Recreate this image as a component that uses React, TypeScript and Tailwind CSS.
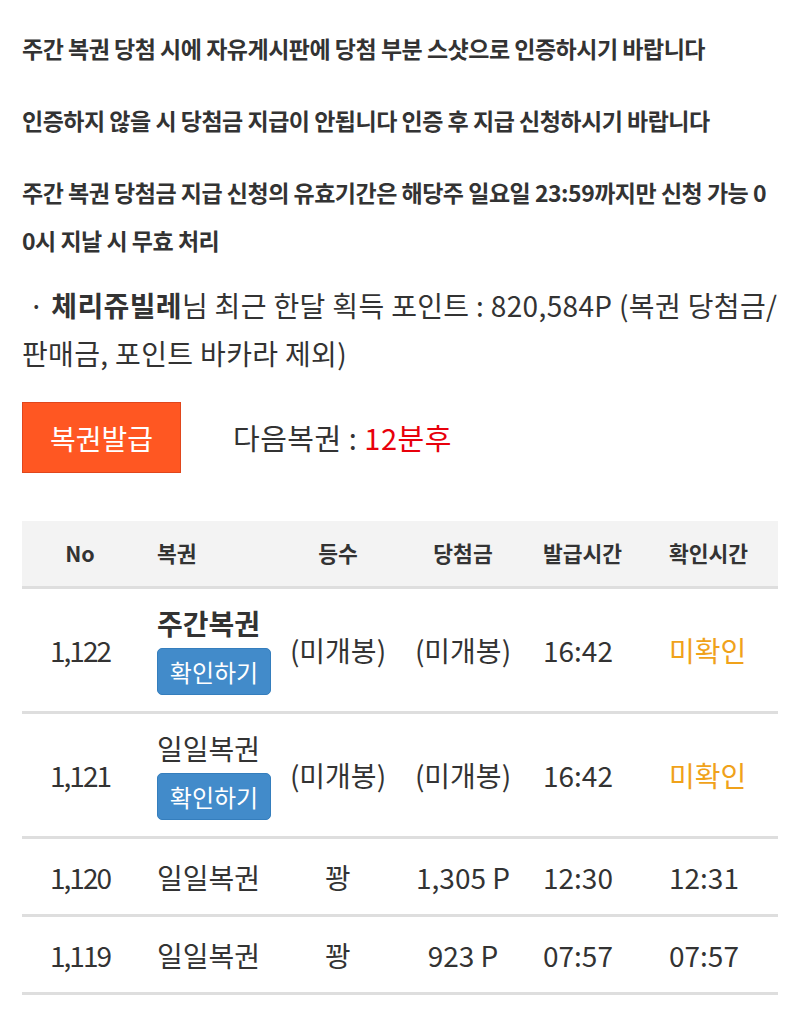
import React from "react";

type Row = {
  no: string;
  name: string;
  bold?: boolean;
  check?: boolean;
  rank: string;
  prize: string;
  issued: string;
  confirmed: string;
  pending?: boolean;
};

const rows: Row[] = [
  { no: "1,122", name: "주간복권", bold: true, check: true, rank: "(미개봉)", prize: "(미개봉)", issued: "16:42", confirmed: "미확인", pending: true },
  { no: "1,121", name: "일일복권", check: true, rank: "(미개봉)", prize: "(미개봉)", issued: "16:42", confirmed: "미확인", pending: true },
  { no: "1,120", name: "일일복권", rank: "꽝", prize: "1,305 P", issued: "12:30", confirmed: "12:31" },
  { no: "1,119", name: "일일복권", rank: "꽝", prize: "923 P", issued: "07:57", confirmed: "07:57" },
];

const cols = "grid grid-cols-[116px_144px_112px_138px_125px_121px]";

export default function App() {
  return (
    <div
      className="w-[800px] bg-white px-[22px] pt-6 pb-4 text-[#333]"
      style={{ fontFamily: '"Noto Sans CJK KR", "Noto Sans", sans-serif' }}
    >
      <p className="text-[23px] font-bold leading-[48px] tracking-[-0.5px]">
        주간 복권 당첨 시에 자유게시판에 당첨 부분 스샷으로 인증하시기 바랍니다
      </p>
      <p className="mt-6 text-[23px] font-bold leading-[48px] tracking-[-0.5px]">
        인증하지 않을 시 당첨금 지급이 안됩니다 인증 후 지급 신청하시기 바랍니다
      </p>
      <p className="mt-6 text-[23px] font-bold leading-[48px] tracking-[-0.5px]">
        주간 복권 당첨금 지급 신청의 유효기간은 해당주 일요일 23:59까지만 신청 가능 0
        <br />
        0시 지날 시 무효 처리
      </p>

      <p className="mt-[17px] text-[28px] leading-[48px] tracking-[0.35px]">
        {"\u00a0· "}
        <span className="font-bold">체리쥬빌레</span>님 최근 한달 획득 포인트 : 820,584P (복권 당첨금/
        <br />
        판매금, 포인트 바카라 제외)
      </p>

      <div className="mt-[25px] flex items-center">
        <button className="flex h-[71px] w-[159px] items-center justify-center border border-[#e0461c] bg-[#ff5722] text-[28px] text-white">
          복권발급
        </button>
        <div className="ml-[52px] text-[29px] tracking-[0.5px]">
          다음복권 : <span className="text-[#e8000b]">12분후</span>
        </div>
      </div>

      <div className="mt-12 w-[756px]">
        <div className={`${cols} h-[68px] items-center border-b-[3px] border-[#dedede] bg-[#f3f3f3] text-[21.5px] font-bold`}>
          <div className="text-center">No</div>
          <div className="pl-[19px]">복권</div>
          <div className="text-center">등수</div>
          <div className="text-center">당첨금</div>
          <div className="pl-[11px]">발급시간</div>
          <div className="pl-[12px]">확인시간</div>
        </div>
        {rows.map((r) => (
          <div
            key={r.no}
            className={`${cols} items-center border-b-[3px] border-[#dedede] text-[28px] ${r.check ? "py-4" : "h-[78px]"}`}
          >
            <div className="text-center tracking-[-2px]">{r.no}</div>
            <div className="flex flex-col items-start pl-[19px]">
              <div className={`leading-[36px] ${r.bold ? "font-bold" : ""}`}>{r.name}</div>
              {r.check && (
                <button className="mt-[7px] flex h-[47px] w-[114px] items-center justify-center rounded-[5px] border border-[#357ebd] bg-[#428bca] text-[24px] text-white">
                  확인하기
                </button>
              )}
            </div>
            <div className="text-center">{r.rank}</div>
            <div className="text-center">{r.prize}</div>
            <div className="pl-[11px]">{r.issued}</div>
            <div className={`pl-[12px] ${r.pending ? "text-[#f0a21a]" : ""}`}>{r.confirmed}</div>
          </div>
        ))}
      </div>
    </div>
  );
}
